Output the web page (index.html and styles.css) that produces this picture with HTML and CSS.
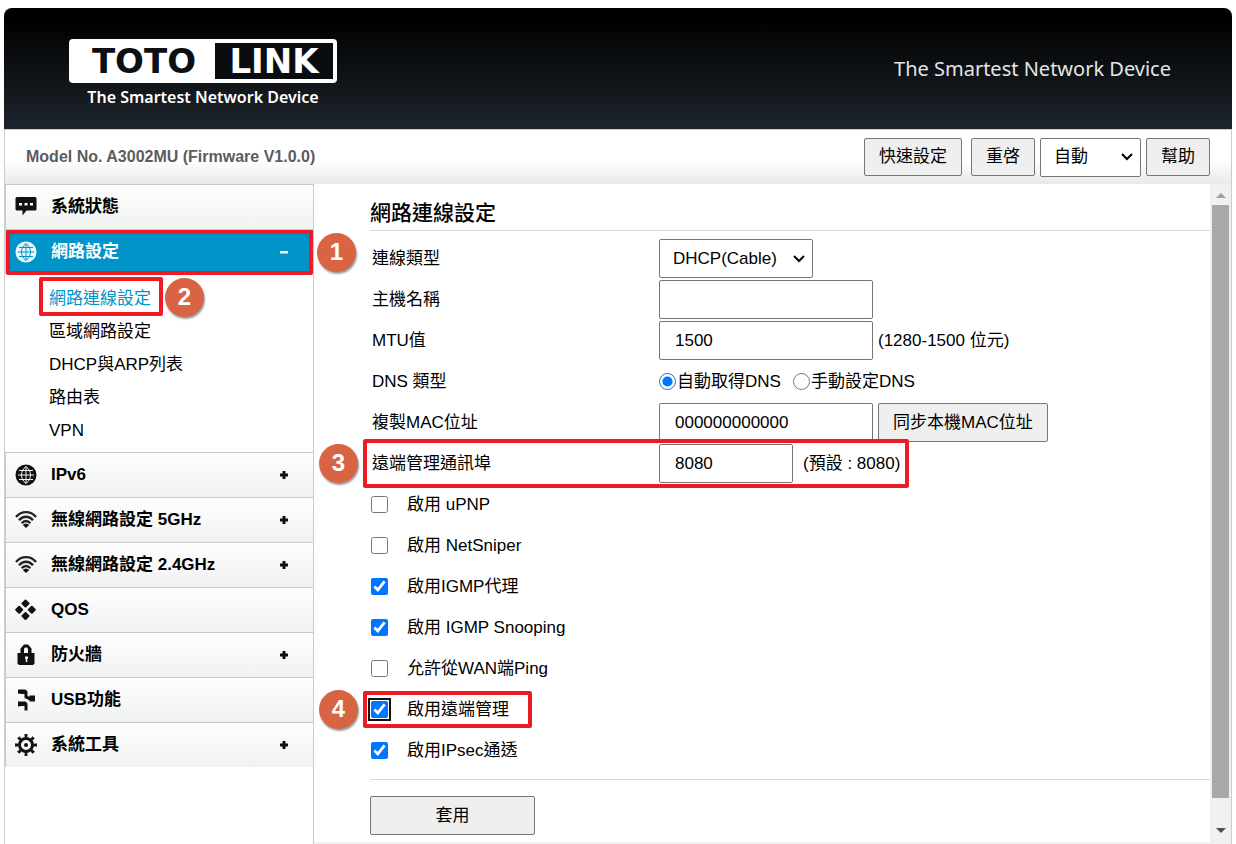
FILE: index.html
```html
<!DOCTYPE html>
<html lang="zh-Hant">
<head>
    <meta charset="UTF-8">
    <meta name="viewport" content="width=device-width, initial-scale=1.0">
    <title>TOTOLINK A3002MU</title>
    <link rel="stylesheet" href="styles.css">
</head>
<body>
    <div class="shell">
        <header class="header">
            <div class="logo">
                <div class="logo-box">
                    <span class="logo-toto">TOTO</span>
                    <span class="logo-link">LINK</span>
                </div>
                <p class="logo-tagline">The Smartest Network Device</p>
            </div>
            <p class="slogan">The Smartest Network Device</p>
        </header>

        <div class="infobar">
            <strong class="model">Model No. A3002MU (Firmware V1.0.0)</strong>
            <div class="tools">
                <button type="button" class="btn btn-quick">快速設定</button>
                <button type="button" class="btn">重啓</button>
                <select class="select select-lang" aria-label="Language">
                    <option>自動</option>
                </select>
                <button type="button" class="btn">幫助</button>
            </div>
        </div>

        <div class="main">
            <nav class="sidebar">
                <a class="item" href="#">
                    <svg class="icon" viewBox="0 0 22 22"><path d="M2 1h18a1.500 1.500 0 0 1 1.500 1.500V13a1.500 1.500 0 0 1-1.500 1.500h-8.500L7.500 19.500v-5H2A1.500 1.500 0 0 1 .5 13V2.500A1.500 1.500 0 0 1 2 1z"/><path fill="#fff" d="M4 7h3v2.500H4zM9.500 7h3v2.500h-3zM15 7h3v2.500h-3z"/></svg>
                    <span class="item-text">系統狀態</span>
                </a>
                <a class="item item-active" href="#">
                    <svg class="icon" viewBox="0 0 22 22"><circle cx="11" cy="11" r="10.500"/><path class="grid-line" d="M3 11h16M4 6.500h14M4 15.500h14M11 3v16M11 2.500C5 7 5 15 11 19.500M11 2.500c6 4.500 6 12.500 0 17"/></svg>
                    <span class="item-text">網路設定</span>
                    <svg class="sign" viewBox="0 0 10 10"><path d="M1 4h8v2.500H1z"/></svg>
                    <span class="mark mark-menu"></span>
                    <span class="step step-menu">1</span>
                </a>
                <ul class="submenu">
                    <li class="sub-current"><a href="#">網路連線設定</a><span class="mark mark-sub"></span><span class="step step-sub">2</span></li>
                    <li><a href="#">區域網路設定</a></li>
                    <li><a href="#">DHCP與ARP列表</a></li>
                    <li><a href="#">路由表</a></li>
                    <li><a href="#">VPN</a></li>
                </ul>
                <a class="item" href="#">
                    <svg class="icon" viewBox="0 0 22 22"><circle cx="11" cy="11" r="10.500"/><path class="grid-line" d="M3 11h16M4 6.500h14M4 15.500h14M11 3v16M11 2.500C5 7 5 15 11 19.500M11 2.500c6 4.500 6 12.500 0 17"/></svg>
                    <span class="item-text">IPv6</span>
                    <svg class="sign" viewBox="0 0 10 10"><path d="M3.500 1h3v2.500H9v3H6.500V9h-3V6.500H1v-3h2.500z"/></svg>
                </a>
                <a class="item" href="#">
                    <svg class="icon" viewBox="0 0 22 22"><path class="wave" d="M1 8C6.500 1.500 15.500 1.500 21 8M4 11.200c4-4.700 10-4.700 14 0M6.700 14.200c2.500-3 6.100-3 8.600 0"/><path d="M7.800 16c2-2 4.400-2 6.400 0L11 19z"/></svg>
                    <span class="item-text">無線網路設定 5GHz</span>
                    <svg class="sign" viewBox="0 0 10 10"><path d="M3.500 1h3v2.500H9v3H6.500V9h-3V6.500H1v-3h2.500z"/></svg>
                </a>
                <a class="item" href="#">
                    <svg class="icon" viewBox="0 0 22 22"><path class="wave" d="M1 8C6.500 1.500 15.500 1.500 21 8M4 11.200c4-4.700 10-4.700 14 0M6.700 14.200c2.500-3 6.100-3 8.600 0"/><path d="M7.800 16c2-2 4.400-2 6.400 0L11 19z"/></svg>
                    <span class="item-text">無線網路設定 2.4GHz</span>
                    <svg class="sign" viewBox="0 0 10 10"><path d="M3.500 1h3v2.500H9v3H6.500V9h-3V6.500H1v-3h2.500z"/></svg>
                </a>
                <a class="item" href="#">
                    <svg class="icon diamonds" viewBox="0 0 22 22"><path d="M10.500 1.500l3 3-3 3-3-3zM10.500 14l3 3-3 3-3-3zM4.200 7.700l3 3-3 3-3-3zM16.800 7.700l3 3-3 3-3-3z"/></svg>
                    <span class="item-text">QOS</span>
                </a>
                <a class="item" href="#">
                    <svg class="icon" viewBox="0 0 22 22"><path fill-rule="evenodd" d="M5.500 9V4.500L9 .5h4l3.500 4V9h3v10.500L18 21H4l-1.500-1.500V9zM9 9h4V5l-1-1.500h-2L9 5zm1 3.500v2l.7.500v3h1.600v-3l.7-.5v-2z"/></svg>
                    <span class="item-text">防火牆</span>
                    <svg class="sign" viewBox="0 0 10 10"><path d="M3.500 1h3v2.500H9v3H6.500V9h-3V6.500H1v-3h2.500z"/></svg>
                </a>
                <a class="item" href="#">
                    <svg class="icon" viewBox="0 0 22 22"><path d="M3 .5h7.500l2 2V7l2 .8V6.500H20v6h-5.500v-1.300L9.500 9V5H6.500L3 4.500zM3 12.500h7.500l2 2V21.500h-3V17H6.500L3 17.500z"/></svg>
                    <span class="item-text">USB功能</span>
                </a>
                <a class="item" href="#">
                    <svg class="icon" viewBox="0 0 22 22"><circle class="gear-teeth" cx="11" cy="11" r="9.200" pathLength="80"/><circle class="gear-ring" cx="11" cy="11" r="6.500"/><circle cx="11" cy="11" r="2"/></svg>
                    <span class="item-text">系統工具</span>
                    <svg class="sign" viewBox="0 0 10 10"><path d="M3.500 1h3v2.500H9v3H6.500V9h-3V6.500H1v-3h2.500z"/></svg>
                </a>
            </nav>

            <main class="content">
                <form class="form">
                    <h1 class="title">網路連線設定</h1>
                    <div class="rows">
                        <div class="row">
                            <label class="name" for="wanType">連線類型</label>
                            <select class="select select-wan" id="wanType">
                                <option>DHCP(Cable)</option>
                            </select>
                        </div>
                        <div class="row">
                            <label class="name" for="hostName">主機名稱</label>
                            <input class="text" type="text" id="hostName">
                        </div>
                        <div class="row">
                            <label class="name" for="mtu">MTU值</label>
                            <input class="text" type="text" id="mtu" value="1500">
                            <span class="hint">(1280-1500 位元)</span>
                        </div>
                        <div class="row">
                            <span class="name">DNS 類型</span>
                            <label class="radio"><input type="radio" name="dns" checked>自動取得DNS</label>
                            <label class="radio"><input type="radio" name="dns">手動設定DNS</label>
                        </div>
                        <div class="row">
                            <label class="name" for="mac">複製MAC位址</label>
                            <input class="text" type="text" id="mac" value="000000000000">
                            <button type="button" class="btn btn-mac">同步本機MAC位址</button>
                        </div>
                        <div class="row">
                            <label class="name" for="port">遠端管理通訊埠</label>
                            <input class="text text-short" type="text" id="port" value="8080">
                            <span class="hint hint-port">(預設 : 8080)</span>
                            <span class="mark mark-port"></span>
                            <span class="step step-row">3</span>
                        </div>
                        <div class="row">
                            <label class="check"><input type="checkbox">啟用 uPNP</label>
                        </div>
                        <div class="row">
                            <label class="check"><input type="checkbox">啟用 NetSniper</label>
                        </div>
                        <div class="row">
                            <label class="check"><input type="checkbox" checked>啟用IGMP代理</label>
                        </div>
                        <div class="row">
                            <label class="check"><input type="checkbox" checked>啟用 IGMP Snooping</label>
                        </div>
                        <div class="row">
                            <label class="check"><input type="checkbox">允許從WAN端Ping</label>
                        </div>
                        <div class="row">
                            <label class="check"><input class="focused" type="checkbox" checked>啟用遠端管理</label>
                            <span class="mark mark-remote"></span>
                            <span class="step step-row">4</span>
                        </div>
                        <div class="row">
                            <label class="check"><input type="checkbox" checked>啟用IPsec通透</label>
                        </div>
                    </div>
                    <div class="actions">
                        <button type="button" class="btn btn-apply">套用</button>
                    </div>
                </form>
                <div class="scrollbar">
                    <svg class="arrow arrow-up" viewBox="0 0 10 5"><path d="M0 5l5-5 5 5z"/></svg>
                    <div class="thumb"></div>
                    <svg class="arrow arrow-down" viewBox="0 0 10 5"><path d="M0 0h10L5 5z"/></svg>
                </div>
            </main>
        </div>
    </div>
</body>
</html>
```

FILE: styles.css
```css
* {
    box-sizing: border-box;
}
body {
    margin: 0;
    padding: 8px 4px 0;
    background: #fff;
    color: #000;
    font-family: "Liberation Sans", Arial, "Noto Sans CJK TC", sans-serif;
    font-size: 17px;
    line-height: 24px;
}
a {
    color: inherit;
    text-decoration: none;
}
p {
    margin: 0;
}
.shell {
    display: flex;
    flex-direction: column;
    min-height: calc(100vh - 8px);
}

/* header */
.header {
    display: flex;
    justify-content: space-between;
    align-items: flex-start;
    height: 121px;
    padding: 31px 61px 0 65px;
    border-radius: 8px 8px 0 0;
    background: linear-gradient(#000 8%, #1d242c);
    color: #fff;
    font-family: "Noto Sans", "Open Sans", sans-serif;
}
.logo {
    width: 268px;
}
.logo-box {
    display: flex;
    height: 44px;
    padding: 4px;
    border-radius: 4px;
    background: #fff;
    font-family: "DejaVu Sans", sans-serif;
    font-size: 34px;
    font-weight: bold;
    line-height: 36px;
    text-align: center;
}
.logo-toto {
    flex: 1;
    color: #0d1013;
}
.logo-link {
    width: 118px;
    background: #0a0d10;
}
.logo-tagline {
    padding-top: 2px;
    font-size: 16px;
    font-weight: 600;
    text-align: center;
    white-space: nowrap;
}
.slogan {
    padding-top: 18px;
    font-size: 20px;
    color: #e4e4e4;
}

/* model and tools */
.infobar {
    display: flex;
    justify-content: space-between;
    align-items: center;
    height: 55px;
    padding: 0 21px;
    border: 1px solid #ccc;
    border-bottom: 0;
    background: linear-gradient(#fff 55%, #e9e9e9);
}
.model {
    color: #5c5c60;
    font-size: 16px;
}
.tools {
    display: flex;
    align-items: center;
    gap: 5px;
}
.btn {
    height: 38px;
    padding: 0 14px;
    border: 1px solid #767676;
    border-radius: 2px;
    background: #efefef;
    color: #000;
    font: inherit;
}
.btn-quick {
    margin-right: 4px;
}
.select {
    height: 39px;
    padding: 0 30px 0 13px;
    border: 1px solid #767676;
    border-radius: 2px;
    appearance: none;
    background: #fff url("data:image/svg+xml,%3Csvg xmlns='http://www.w3.org/2000/svg' width='12' height='8'%3E%3Cpath d='M1 1l5 5 5-5' fill='none' stroke='%23000' stroke-width='2'/%3E%3C/svg%3E") no-repeat right 7px center;
    color: #000;
    font: inherit;
}
.select-lang {
    width: 101px;
}
.select-wan {
    width: 154px;
}

/* side menu */
.main {
    display: flex;
    flex: 1;
    border: 1px solid #ccc;
    border-width: 0 1px;
}
.sidebar {
    flex: none;
    width: 309px;
    border-right: 1px solid #ccc;
    font-weight: bold;
}
.item {
    position: relative;
    display: flex;
    align-items: center;
    height: 45px;
    padding: 0 24px 0 9px;
    border-top: 1px solid #c8c8c8;
    border-left: 1px solid #ccc;
    background: linear-gradient(#fefefe, #f0f1f1);
}
.item-active {
    background: #0094c8;
    color: #fff;
}
.icon {
    width: 22px;
    height: 22px;
    fill: #111;
}
.item-active .icon {
    fill: #e8f6fc;
}
.item-text {
    flex: 1;
    padding-left: 14px;
}
.sign {
    width: 10px;
    height: 10px;
    fill: #111;
}
.item-active .sign {
    fill: #fff;
}
.grid-line {
    fill: none;
    stroke: #f4f4f4;
    stroke-width: 1;
}
.item-active .grid-line {
    stroke: #0094c8;
}
.wave {
    fill: none;
    stroke: #222;
    stroke-width: 2.4;
}
.diamonds {
    stroke: #111;
    stroke-width: 2;
    stroke-linejoin: round;
}
.gear-teeth {
    fill: none;
    stroke: #111;
    stroke-width: 3.5;
    stroke-dasharray: 4 6;
    stroke-dashoffset: 2;
}
.gear-ring {
    fill: none;
    stroke: #111;
    stroke-width: 3;
}
.submenu {
    margin: 0;
    padding: 8px 0 5px 44px;
    list-style: none;
    font-weight: normal;
    line-height: 33px;
}
.submenu li {
    position: relative;
}
.sub-current {
    color: #0094c8;
}

/* settings form */
.content {
    display: flex;
    flex: 1;
    border-bottom: 2px solid #f0f0f0;
}
.form {
    flex: 1;
    padding: 16px 0 7px 56px;
}
.title {
    margin: 0;
    height: 31px;
    border-bottom: 1px solid #d8d8d8;
    font-size: 21px;
    font-weight: 500;
    line-height: 26px;
}
.rows {
    padding: 7px 0 8px;
    border-bottom: 1px solid #d8d8d8;
}
.row {
    position: relative;
    display: flex;
    align-items: center;
    height: 41px;
}
.name {
    width: 289px;
    padding-left: 2px;
}
.text {
    width: 214px;
    height: 39px;
    padding: 0 15px;
    border: 1px solid #767676;
    border-radius: 2px;
    background: #fff;
    color: #000;
    font: inherit;
}
.text-short {
    width: 134px;
}
.hint {
    padding-left: 5px;
}
.hint-port {
    padding-left: 10px;
}
.radio {
    display: flex;
    align-items: center;
    margin-right: 12px;
}
.radio input,
.check input {
    width: 17px;
    height: 17px;
    margin: 0;
    accent-color: #0075ff;
}
.radio input {
    margin-right: 1px;
}
.btn-mac {
    height: 39px;
    margin-left: 5px;
}
.check {
    display: flex;
    align-items: center;
    gap: 19px;
    padding-left: 1px;
}
.check .focused {
    outline: 2px solid #101010;
    outline-offset: 1px;
    border-radius: 2px;
}
.actions {
    padding-top: 16px;
}
.btn-apply {
    width: 165px;
    height: 39px;
}

/* numbered marks */
.mark {
    position: absolute;
    border: 4px solid #ed1c24;
    border-radius: 2px;
}
.mark-menu {
    inset: 0 0 -1px;
}
.mark-sub {
    top: -5px;
    left: -10px;
    width: 124px;
    height: 39px;
}
.mark-port {
    top: -4px;
    left: -7px;
    width: 546px;
    height: 49px;
}
.mark-remote {
    top: 2px;
    left: -7px;
    width: 169px;
    height: 37px;
}
.step {
    position: absolute;
    width: 39px;
    height: 39px;
    border-radius: 50%;
    background: #d96444;
    box-shadow: 1px 2px 2px #999;
    color: #fff;
    font-size: 24px;
    font-weight: bold;
    line-height: 38px;
    text-align: center;
}
.step-menu {
    top: 3px;
    left: 311px;
}
.step-sub {
    top: -4px;
    left: 116px;
}
.step-row {
    top: 1px;
    left: -51px;
}

/* scrollbar */
.scrollbar {
    display: flex;
    flex-direction: column;
    align-items: center;
    width: 21px;
    background: #f0f0f0;
}
.thumb {
    flex: 1;
    width: 17px;
    background: #a8a8a8;
}
.arrow {
    width: 10px;
    height: 5px;
}
.arrow-up {
    margin: 9px 0 7px;
    fill: #a0a0a0;
}
.arrow-down {
    margin: 30px 0 9px;
    fill: #505050;
}
```
